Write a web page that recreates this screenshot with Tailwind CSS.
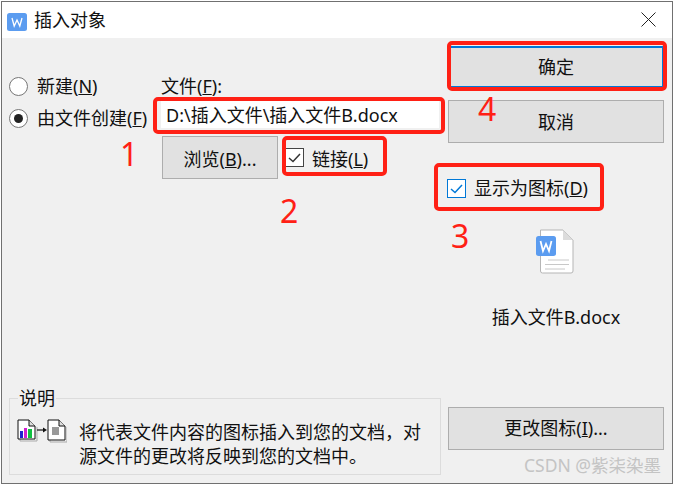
<!DOCTYPE html>
<html>
<head>
    <meta charset="utf-8">
    <title>插入对象</title>
    <script src="https://cdn.jsdelivr.net/npm/@tailwindcss/browser@4"></script>
</head>
<body class="bg-white">
    <div class="relative ml-[1px] mt-[1px] w-[672px] h-[483px] overflow-hidden bg-[#f0f0f0] border border-[#707070] text-[18px] leading-6 text-[#111] font-['Noto_Sans','Noto_Sans_CJK_SC',sans-serif]">

        <!-- Title bar -->
        <div class="h-9 bg-white flex items-center pl-[5px]">
            <svg width="20" height="18" viewBox="0 0 20 18" class="mr-[7px] mt-[3px]">
                <rect x="0" y="0" width="20" height="18" rx="2.500" fill="#5b9cf0"/>
                <path d="M5 5 L7.200 13 L10 7 L12.800 13 L15 5" fill="none" stroke="#fff" stroke-width="1.300"/>
            </svg>
            <span>插入对象</span>
            <svg width="15" height="15" viewBox="0 0 15 15" class="ml-auto mr-[16px] -mt-[2px]">
                <path d="M0.500 0.500 L14.500 14.500 M14.500 0.500 L0.500 14.500" stroke="#222" stroke-width="1"/>
            </svg>
        </div>

        <div class="flex h-[442px]">
            <!-- Left side -->
            <div class="w-[446px] pl-[7px] flex flex-col">
                <div class="flex h-[145px] pt-[36px]">
                    <div class="w-[152px] flex flex-col gap-2">
                        <label class="flex items-center gap-[9px] h-6">
                            <span class="size-[19px] rounded-full border border-[#777] bg-white"></span>
                            <span>新建(<u>N</u>)</span>
                        </label>
                        <label class="flex items-center gap-[9px] h-6">
                            <span class="size-[19px] rounded-full border border-[#777] bg-white flex items-center justify-center">
                                <span class="size-[9px] rounded-full bg-[#222]"></span>
                            </span>
                            <span class="whitespace-nowrap">由文件创建(<u>F</u>)</span>
                        </label>
                    </div>
                    <div class="flex flex-col">
                        <div class="h-6">文件(<u>F</u>):</div>
                        <div class="w-[278px] h-[30px] bg-white flex items-center pl-[5px] pt-[3px] whitespace-nowrap">D:\插入文件\插入文件B.docx</div>
                        <div class="flex items-center mt-[8px] ml-[1px]">
                            <button class="w-[116px] h-[43px] pt-[3px] bg-[#e1e1e1] border border-[#adadad]">浏览(<u>B</u>)...</button>
                            <label class="ml-[7px] flex items-center gap-2">
                                <span class="size-[19px] bg-white border border-[#444] flex items-center justify-center">
                                    <svg width="13" height="13" viewBox="0 0 13 13"><path d="M1 7 L5 10.500 L12 3" fill="none" stroke="#333" stroke-width="1.500"/></svg>
                                </span>
                                <span class="pt-[2px]">链接(<u>L</u>)</span>
                            </label>
                        </div>
                    </div>
                </div>

                <!-- 说明 group -->
                <fieldset class="mt-[205px] w-[432px] h-[87px] border border-[#dcdcdc] pl-[7px] min-w-0">
                    <legend class="ml-[1px] px-[1px] leading-[20px]">说明</legend>
                    <div class="flex mt-[12px]">
                        <svg width="50" height="24" viewBox="0 0 50 24" class="-mt-[1px] shrink-0">
                            <path d="M3 3 V22 H20 V8 M33 3 V23 H50 V8" fill="none" stroke="#aaa"/>
                            <path d="M1 1 H12 L18 7 V20 H1 Z" fill="#fff" stroke="#111"/>
                            <path d="M12 1 V7 H18" fill="#ddd" stroke="#111"/>
                            <rect x="3" y="12" width="3" height="7" fill="#2020d0"/>
                            <rect x="7" y="9" width="3" height="10" fill="#d020d0"/>
                            <rect x="11" y="10" width="4" height="9" fill="#10c040"/>
                            <path d="M20 11 H27" stroke="#111" stroke-width="1.200"/>
                            <path d="M26 8.500 L30 11 L26 13.500 Z" fill="#111"/>
                            <path d="M31 1 H42 L48 7 V21 H31 Z" fill="#fff" stroke="#111"/>
                            <path d="M42 1 V7 H48" fill="#ddd" stroke="#111"/>
                            <rect x="35" y="8" width="7" height="8" fill="#999"/>
                        </svg>
                        <p class="ml-[12px] w-[350px]">将代表文件内容的图标插入到您的文档，对源文件的更改将反映到您的文档中。</p>
                    </div>
                </fieldset>
            </div>

            <!-- Right side -->
            <div class="w-[216px] flex flex-col">
                <button class="mt-[8px] h-[42px] bg-[#e1e1e1] border-2 border-[#0078d7]">确定</button>
                <button class="mt-[12px] h-[43px] bg-[#e1e1e1] border border-[#adadad]">取消</button>
                <label class="mt-[33px] -ml-[1px] flex items-center gap-2">
                    <span class="size-[19px] bg-white border border-[#0078d7] flex items-center justify-center">
                        <svg width="13" height="13" viewBox="0 0 13 13"><path d="M1 7 L5 10.500 L12 3" fill="none" stroke="#0078d7" stroke-width="1.500"/></svg>
                    </span>
                    <span>显示为图标(<u>D</u>)</span>
                </label>
                <div class="mt-[29px] flex flex-col items-center">
                    <svg width="38" height="46" viewBox="0 0 38 46" class="-ml-[3px]">
                        <path d="M4.500 1 H27 L37 11 V42 Q37 44 35 44 H6.500 Q4.500 44 4.500 42 Z" fill="#fff" stroke="#b5b5b5"/>
                        <path d="M27 1 V11 H37 Z" fill="#dcdcdc"/>
                        <path d="M12 31 H33 M9 35.500 H33 M9 40 H29" stroke="#c8c8c8"/>
                        <rect x="0" y="7" width="20" height="20" rx="2.500" fill="#5b9cf0"/>
                        <path d="M4.500 12 L7 22 L10 15 L13 22 L15.500 12" fill="none" stroke="#fff" stroke-width="1.800"/>
                    </svg>
                    <div class="mt-[30px] text-center">插入文件B.docx</div>
                </div>
                <button class="mt-[78px] h-[43px] pb-[2px] bg-[#e1e1e1] border border-[#adadad]">更改图标(<u>I</u>)...</button>
                <div class="mt-[5px] pr-[3px] text-right text-[17.500px] leading-5 text-[#c4c4c4] whitespace-nowrap">CSDN @紫柒染墨</div>
            </div>
        </div>

        <!-- Red annotations lying over the dialog -->
        <div class="absolute left-[151px] top-[95px] w-[292px] h-[37px] border-[4px] border-[#ff2015] rounded-[5px]"></div>
        <div class="absolute left-[280px] top-[134px] w-[105px] h-[40px] border-[4px] border-[#ff2015] rounded-[5px]"></div>
        <div class="absolute left-[432px] top-[161px] w-[170px] h-[48px] border-[4px] border-[#ff2015] rounded-[5px]"></div>
        <div class="absolute left-[445px] top-[39px] w-[220px] h-[50px] border-[4px] border-[#ff2015] rounded-[5px]"></div>
        <span class="absolute left-[118px] top-[134px] text-[32px] leading-9 text-[#ff2015]">1</span>
        <span class="absolute left-[278px] top-[191px] text-[32px] leading-9 text-[#ff2015]">2</span>
        <span class="absolute left-[449px] top-[216px] text-[32px] leading-9 text-[#ff2015]">3</span>
        <span class="absolute left-[476px] top-[89px] text-[32px] leading-9 text-[#ff2015]">4</span>
    </div>
</body>
</html>
